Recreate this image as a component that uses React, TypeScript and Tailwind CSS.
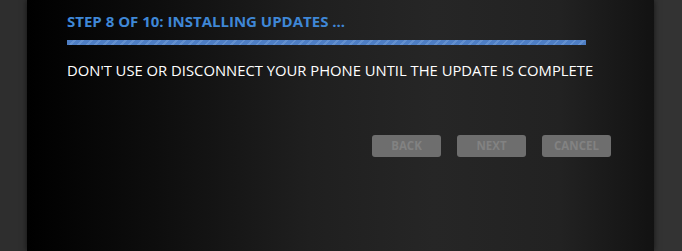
import React from "react";

export default function App() {
  return (
    <div className="flex h-[251px] w-[682px] overflow-hidden bg-[#2f2f2f]" style={{ fontFamily: '"Open Sans", "Noto Sans", sans-serif' }}>
      <div className="w-[27px] shrink-0 bg-[#2e2e2e]" />
      <div className="relative flex-1 bg-[linear-gradient(90deg,#000000_0%,#0d0d0d_20%,#1f1f1f_45%,#262626_65%,#222222_85%,#121212_100%)] pl-[40px] pt-[11px] shadow-[0_0_6px_rgba(0,0,0,0.6)]">
        <div className="text-[15px] font-bold leading-[20px] text-[#3f87d6]">STEP 8 OF 10: INSTALLING UPDATES ...</div>
        <div className="mt-[9px] h-[5px] w-[519px] bg-[repeating-linear-gradient(-45deg,#4e7ec4_0px,#4e7ec4_4px,#6390cf_4px,#6390cf_6px)]" />
        <div className="mt-[15px] text-[14.8px] leading-[20px] text-white">DON'T USE OR DISCONNECT YOUR PHONE UNTIL THE UPDATE IS COMPLETE</div>
        <div className="mt-[55px] flex justify-end gap-[16px] pr-[43px]">
          {["BACK", "NEXT", "CANCEL"].map((l) => (
            <div key={l} className="flex h-[22px] w-[69px] items-center justify-center rounded-[3px] bg-[#6e6e6e] text-[11.5px] font-bold text-[#828282]">
              {l}
            </div>
          ))}
        </div>
      </div>
      <div className="w-[28px] shrink-0 bg-[#333333]" />
    </div>
  );
}
